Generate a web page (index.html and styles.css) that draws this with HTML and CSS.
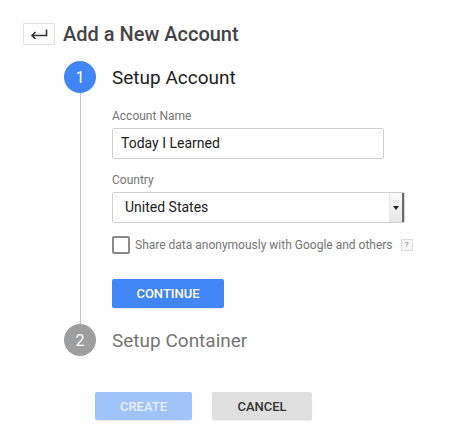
FILE: index.html
```html
<!DOCTYPE html>
<html lang="en">
<head>
<meta charset="utf-8">
<title>Add a New Account</title>
<link rel="stylesheet" href="styles.css">
</head>
<body>
<div class="page">
  <header class="head">
    <button class="back" aria-label="Back">
      <svg width="18" height="10" viewBox="0 0 18 10"><path d="M16.5 0.5 V6.5 H2" fill="none" stroke="#333" stroke-width="1.6"/><path d="M5.5 3 L2 6.5 L5.5 10" fill="none" stroke="#333" stroke-width="1.6"/></svg>
    </button>
    <h1 class="title">Add a New Account</h1>
  </header>

  <div class="steps">
    <div class="step-head">
      <span class="num num-active">1</span>
      <h2 class="step-title">Setup Account</h2>
    </div>
    <div class="step-body">
      <div class="rail"></div>
      <div class="form">
        <label class="label">Account Name</label>
        <div class="input">Today I Learned</div>
        <label class="label label-gap">Country</label>
        <div class="select">
          <span class="select-text">United States</span>
          <span class="select-btn"><span class="tri"></span></span>
        </div>
        <div class="check-row">
          <span class="checkbox"></span>
          <span class="check-text">Share data anonymously with Google and others</span>
          <span class="help">?</span>
        </div>
        <button class="btn btn-primary">CONTINUE</button>
      </div>
    </div>
    <div class="step-head">
      <span class="num num-idle">2</span>
      <h2 class="step-title step-muted">Setup Container</h2>
    </div>
  </div>

  <div class="actions">
    <button class="btn btn-disabled">CREATE</button>
    <button class="btn btn-cancel">CANCEL</button>
  </div>
</div>
</body>
</html>
```

FILE: styles.css
```css
* { box-sizing: border-box; }
html, body { margin: 0; padding: 0; background: #fff; }
body { font-family: Roboto, "Noto Sans", Arial, sans-serif; color: #212121; }

.page { width: 473px; height: 444px; padding: 23px 0 0 23px; }

.head { display: flex; align-items: center; gap: 8px; height: 22px; }
.back {
  width: 32px; height: 22px; padding: 0; margin: 0;
  border: 1px solid #e2e2e2; background: #fff; border-radius: 1px;
  display: flex; align-items: center; justify-content: center;
}
.title { margin: 0; font-size: 20px; font-weight: 500; color: #444; line-height: 22px; }

.steps { margin-top: 16px; padding-left: 41px; }
.step-head { display: flex; align-items: center; gap: 16px; height: 32px; }
.num {
  width: 32px; height: 32px; border-radius: 50%; flex: none;
  display: flex; align-items: center; justify-content: center;
  color: #fff; font-size: 16px;
}
.num-active { background: #4285f4; }
.num-idle { background: #9e9e9e; }
.step-title { margin: 0; font-size: 19px; font-weight: 400; color: #212121; }
.step-muted { color: #757575; }

.step-body { display: grid; grid-template-columns: 32px 1fr; column-gap: 16px; }
.rail { justify-self: center; width: 1px; background: #c4c4c4; }
.form { padding: 15px 0 16px 0; display: flex; flex-direction: column; align-items: flex-start; }

.label { display: block; font-size: 12px; line-height: 16px; color: #757575; margin-bottom: 4px; }
.label-gap { margin-top: 13px; margin-bottom: 4px; }
.input {
  width: 272px; height: 31px; border: 1px solid #d0d0d0; border-radius: 2px;
  padding: 0 8px; font-size: 14px; line-height: 29px; color: #212121;
}
.select {
  width: 293px; height: 31px; border: 1px solid #d0d0d0; border-radius: 2px;
  display: flex; align-items: stretch;
}
.select-text { flex: 1; padding-left: 12px; font-size: 14px; line-height: 29px; color: #212121; }
.select-btn {
  width: 15px; display: flex; align-items: center; justify-content: center;
  background: linear-gradient(#fafafa, #e6e6e6);
  border-left: 1px solid #e8e8e8; border-right: 2px solid #6a6a6a;
}
.tri { width: 0; height: 0; border-left: 3px solid transparent; border-right: 3px solid transparent; border-top: 4px solid #222; }

.check-row { display: flex; align-items: center; margin-top: 13px; height: 18px; }
.checkbox { width: 18px; height: 18px; border: 2px solid #8a8a8a; border-radius: 2px; flex: none; }
.check-text { margin-left: 5px; font-size: 12px; color: #757575; }
.help {
  margin-left: 8px; width: 12px; height: 12px; border: 1px solid #ddd; background: #f6f6f6;
  font-size: 8px; line-height: 10px; text-align: center; color: #777;
}

.btn {
  border: 0; border-radius: 2px; font-family: Roboto, Arial, sans-serif;
  font-size: 13px; font-weight: 500; height: 29px; padding: 0;
  box-shadow: 0 1px 1px rgba(0,0,0,0.08);
}
.btn-primary { margin-top: 25px; width: 112px; background: #4285f4; color: #fff; }

.actions { display: flex; gap: 20px; margin-top: 36px; padding-left: 72px; }
.btn-disabled { width: 97px; height: 28px; background: #a0c3fa; color: #e8f0fe; }
.btn-cancel { width: 100px; height: 28px; background: #e0e0e0; color: #333; }
```
